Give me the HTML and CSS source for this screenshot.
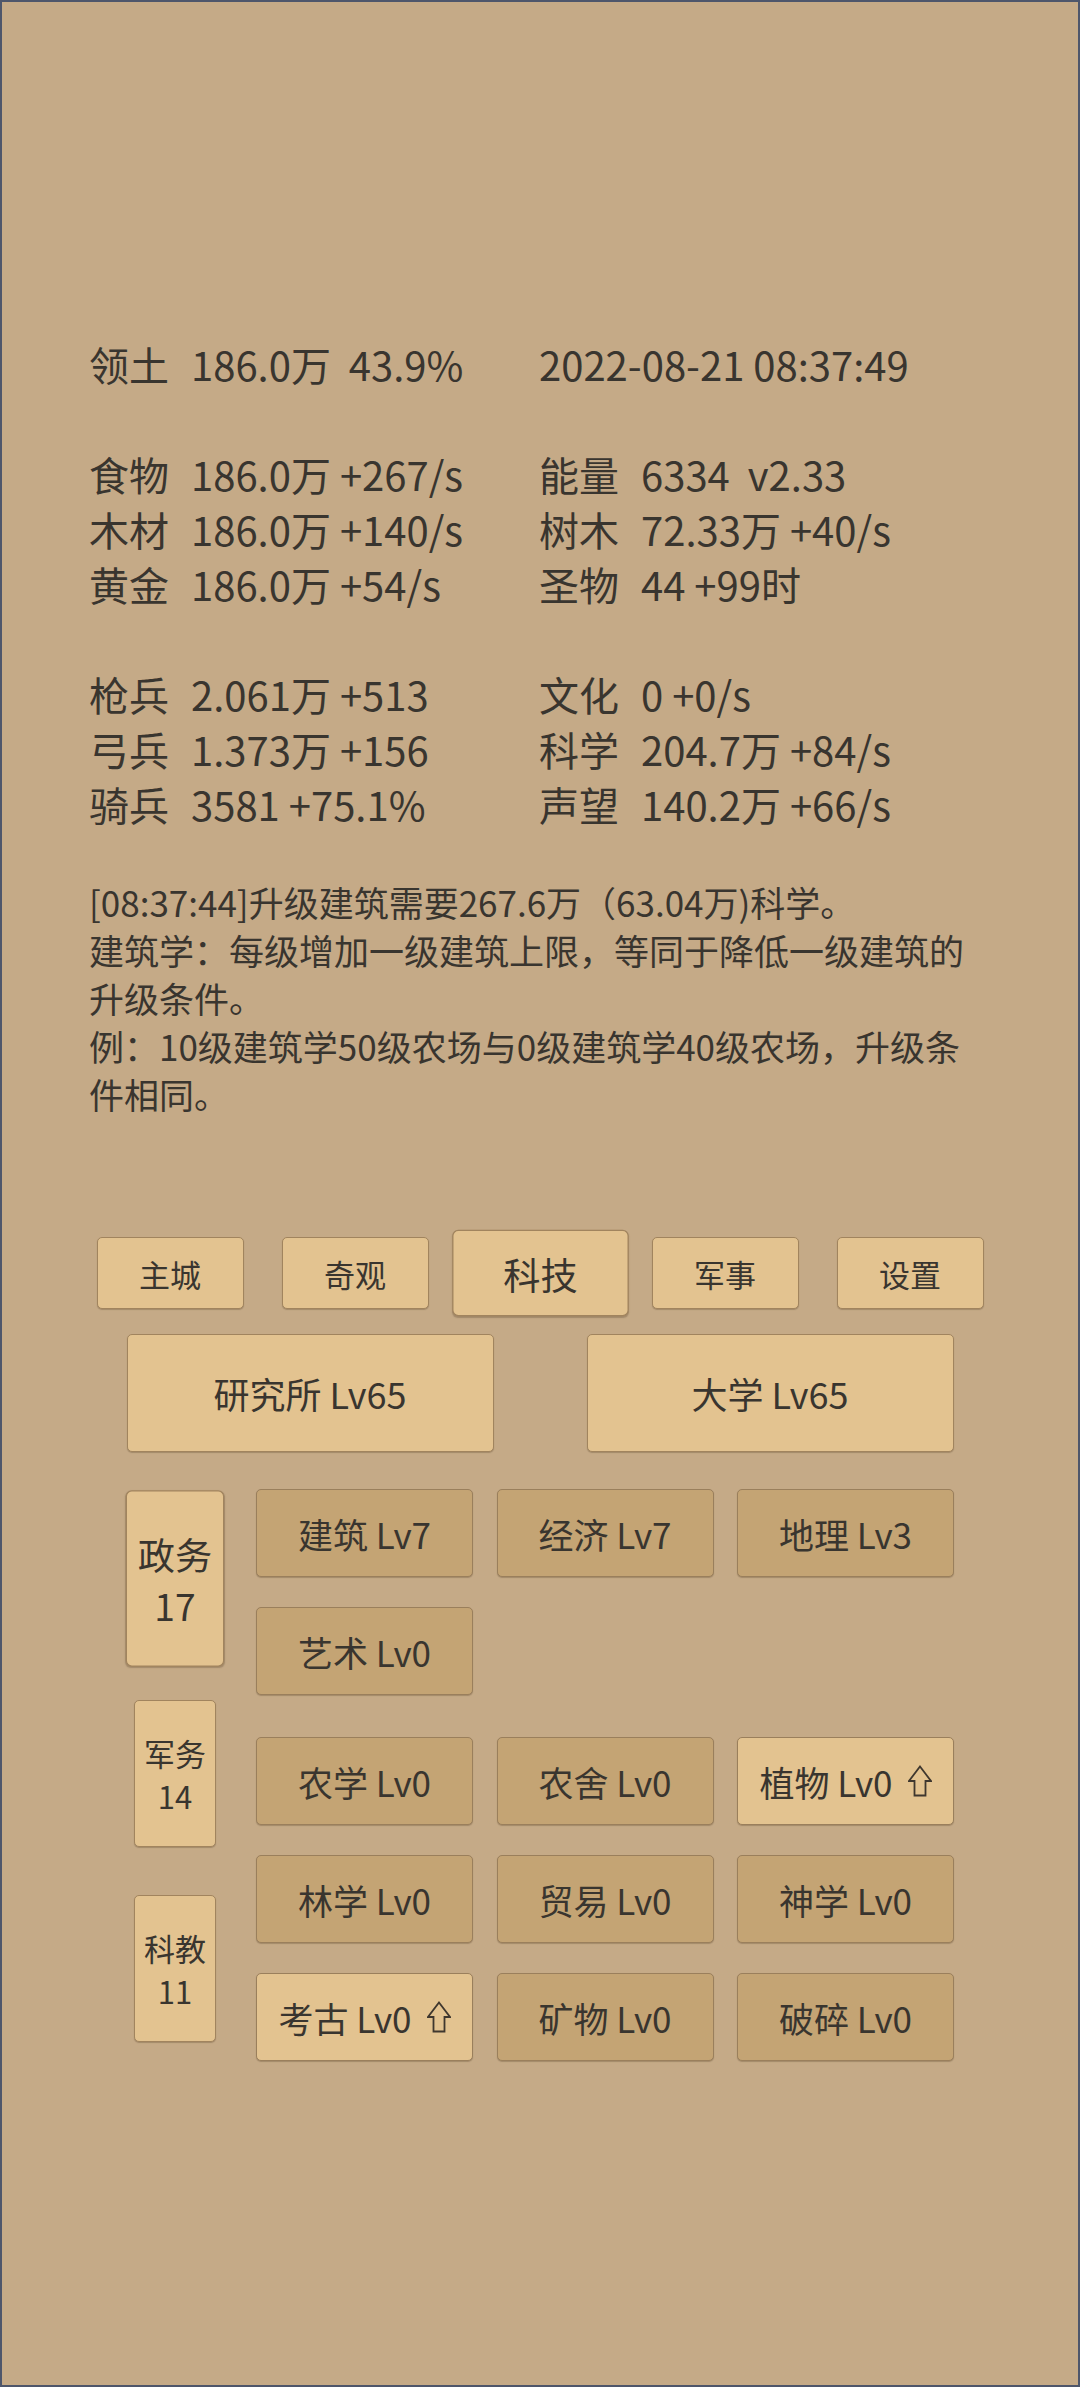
FILE: index.html
```html
<!DOCTYPE html>
<html lang="zh-CN">
<head>
  <meta charset="UTF-8" />
  <meta name="viewport" content="width=device-width, initial-scale=1.0"/>
  <title>领土</title>
  <link rel="stylesheet" href="styles.css">
</head>
<body>
  <div class="stats">
    <div class="group">
      <div class="stat"><span class="k">领土</span>186.0万&nbsp; 43.9%</div>
      <div class="stat">2022-08-21 08:37:49</div>
    </div>
    <div class="group">
      <div class="stat"><span class="k">食物</span>186.0万 +267/s</div>
      <div class="stat"><span class="k">能量</span>6334&nbsp; v2.33</div>
      <div class="stat"><span class="k">木材</span>186.0万 +140/s</div>
      <div class="stat"><span class="k">树木</span>72.33万 +40/s</div>
      <div class="stat"><span class="k">黄金</span>186.0万 +54/s</div>
      <div class="stat"><span class="k">圣物</span>44 +99时</div>
    </div>
    <div class="group">
      <div class="stat"><span class="k">枪兵</span>2.061万 +513</div>
      <div class="stat"><span class="k">文化</span>0 +0/s</div>
      <div class="stat"><span class="k">弓兵</span>1.373万 +156</div>
      <div class="stat"><span class="k">科学</span>204.7万 +84/s</div>
      <div class="stat"><span class="k">骑兵</span>3581 +75.1%</div>
      <div class="stat"><span class="k">声望</span>140.2万 +66/s</div>
    </div>
  </div>

  <div class="log">
    [08:37:44]升级建筑需要267.6万（63.04万)科学。<br>
    建筑学：每级增加一级建筑上限，等同于降低一级建筑的升级条件。<br>
    例：10级建筑学50级农场与0级建筑学40级农场，升级条件相同。
  </div>

  <div class="nav">
    <div class="btn nav-btn">主城</div>
    <div class="btn nav-btn">奇观</div>
    <div class="btn nav-btn active">科技</div>
    <div class="btn nav-btn">军事</div>
    <div class="btn nav-btn">设置</div>
  </div>

  <div class="buildings">
    <div class="btn building">研究所 Lv65</div>
    <div class="btn building">大学 Lv65</div>
  </div>

  <div class="tech">
    <div class="tabs">
      <div class="btn tab active">政务<br>17</div>
      <div class="btn tab">军务<br>14</div>
      <div class="btn tab">科教<br>11</div>
    </div>
    <div class="lists">
      <div class="grid">
        <div class="btn item">建筑 Lv7</div>
        <div class="btn item">经济 Lv7</div>
        <div class="btn item">地理 Lv3</div>
        <div class="btn item">艺术 Lv0</div>
      </div>
      <div class="grid">
        <div class="btn item">农学 Lv0</div>
        <div class="btn item">农舍 Lv0</div>
        <div class="btn item up">植物 Lv0
          <svg class="arrow" viewBox="0 0 24 32"><path d="M12 1.5 L23 16 H17.5 V30.5 H6.5 V16 H1 Z"/></svg>
        </div>
        <div class="btn item">林学 Lv0</div>
        <div class="btn item">贸易 Lv0</div>
        <div class="btn item">神学 Lv0</div>
        <div class="btn item up">考古 Lv0
          <svg class="arrow" viewBox="0 0 24 32"><path d="M12 1.5 L23 16 H17.5 V30.5 H6.5 V16 H1 Z"/></svg>
        </div>
        <div class="btn item">矿物 Lv0</div>
        <div class="btn item">破碎 Lv0</div>
      </div>
    </div>
  </div>
</body>
</html>
```

FILE: styles.css
```css
html, body {
  margin: 0;
}

body {
  box-sizing: border-box;
  width: 1080px;
  height: 2387px;
  border: 2px solid #4e566b;
  background: #c5aa87;
  color: #39352f;
  font-family: "Noto Sans CJK SC", "DejaVu Sans", sans-serif;
  overflow: hidden;
}

/* resource numbers */
.stats {
  padding: 335px 0 0 87px;
  font-size: 40px;
  line-height: 55px;
}

.group {
  display: grid;
  grid-template-columns: 450px 1fr;
}

.group + .group {
  margin-top: 55px;
}

.stat {
  white-space: nowrap;
}

.k {
  margin-right: 22px;
}

/* message log */
.log {
  margin-top: 46px;
  padding: 0 97px 0 87px;
  font-size: 35px;
  line-height: 48px;
}

/* buttons */
.btn {
  box-sizing: border-box;
  display: flex;
  align-items: center;
  justify-content: center;
  text-align: center;
  background: #e3c390;
  border: 1.5px solid #a1845e;
  border-radius: 5px;
  box-shadow: 0 1px 1px rgba(60, 40, 20, 0.25);
  white-space: nowrap;
}

.active {
  transform: scale(1.2);
}

.nav {
  display: flex;
  justify-content: center;
  align-items: center;
  gap: 38px;
  margin-top: 119px;
}

.nav-btn {
  width: 147px;
  height: 72px;
  font-size: 31px;
}

.buildings {
  display: flex;
  justify-content: center;
  gap: 93px;
  margin-top: 25px;
}

.building {
  width: 367px;
  height: 118px;
  font-size: 36px;
}

.tech {
  display: flex;
  margin-top: 37px;
  padding-left: 132px;
}

.tabs {
  display: flex;
  flex-direction: column;
  gap: 48px;
  padding-top: 16px;
}

.tab {
  width: 82px;
  height: 147px;
  font-size: 31px;
  line-height: 43px;
}

.lists {
  margin-left: 40px;
}

.grid {
  display: grid;
  grid-template-columns: repeat(3, 217px);
  grid-auto-rows: 88px;
  column-gap: 23.5px;
  row-gap: 30px;
}

.grid + .grid {
  margin-top: 42px;
}

.item {
  background: #c4a474;
  border-color: #9a7f5c;
  font-size: 35px;
}

.item.up {
  background: #e3c390;
}

.arrow {
  width: 24px;
  height: 32px;
  margin-left: 15px;
  fill: none;
  stroke: #3f372e;
  stroke-width: 1.8;
  stroke-linejoin: miter;
}
```
